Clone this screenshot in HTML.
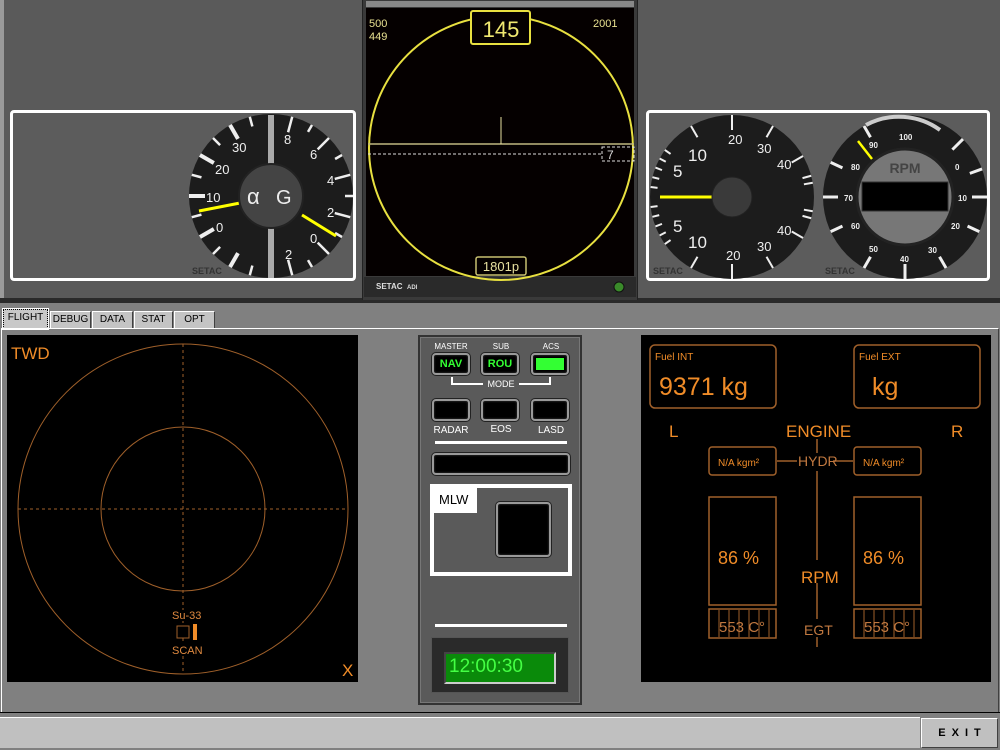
<!DOCTYPE html>
<html><head><meta charset="utf-8"><style>
*{margin:0;padding:0;box-sizing:border-box}
body{width:1000px;height:750px;overflow:hidden;background:#808080;font-family:"Liberation Sans",sans-serif;position:relative}
.a{position:absolute}
.tab{position:absolute;top:311px;height:18px;background:#c4c4c4;border:1px solid #fff;border-right-color:#404040;border-bottom:none;font-size:10px;line-height:16px;text-align:center;color:#000}
.btn{position:absolute;background:#000;border:2px solid #999;border-radius:4px;box-shadow:0 0 0 1px #222,inset 0 0 2px #444}
.lbl{position:absolute;color:#fff;font-size:10px;text-align:center}
</style></head><body>
<div class="a" style="left:0;top:0;width:1000px;height:300px;background:#5a5a5a"></div>
<div class="a" style="left:0;top:0;width:4px;height:300px;background:#9a9a9a"></div>
<div class="a" style="left:0;top:298px;width:1000px;height:5px;background:#2a2a2a"></div>

<div class="a" style="left:10px;top:110px;width:346px;height:171px;border:3px solid #fff;border-radius:4px;background:#5c5c5c"></div>
<svg class="a" style="left:0;top:0" width="362" height="300">
<circle cx="271" cy="196" r="82" fill="#1c1c1c"/>
<g stroke="#eee" stroke-width="2.5">
<line x1="271" y1="114" x2="271" y2="124" transform="rotate(-15 271 196)"/>
<line x1="271" y1="114" x2="271" y2="130" transform="rotate(-30 271 196)" stroke-width="4"/>
<line x1="271" y1="114" x2="271" y2="124" transform="rotate(-45 271 196)"/>
<line x1="271" y1="114" x2="271" y2="130" transform="rotate(-60 271 196)" stroke-width="4"/>
<line x1="271" y1="114" x2="271" y2="124" transform="rotate(-75 271 196)"/>
<line x1="271" y1="114" x2="271" y2="130" transform="rotate(-90 271 196)" stroke-width="4"/>
<line x1="271" y1="114" x2="271" y2="124" transform="rotate(-105 271 196)"/>
<line x1="271" y1="114" x2="271" y2="130" transform="rotate(-120 271 196)" stroke-width="4"/>
<line x1="271" y1="114" x2="271" y2="124" transform="rotate(-135 271 196)"/>
<line x1="271" y1="114" x2="271" y2="130" transform="rotate(-150 271 196)" stroke-width="4"/>
<line x1="271" y1="114" x2="271" y2="124" transform="rotate(-165 271 196)"/>
<line x1="271" y1="114" x2="271" y2="130" transform="rotate(15 271 196)"/>
<line x1="271" y1="114" x2="271" y2="122" transform="rotate(30 271 196)"/>
<line x1="271" y1="114" x2="271" y2="130" transform="rotate(45 271 196)"/>
<line x1="271" y1="114" x2="271" y2="122" transform="rotate(60 271 196)"/>
<line x1="271" y1="114" x2="271" y2="130" transform="rotate(75 271 196)"/>
<line x1="271" y1="114" x2="271" y2="122" transform="rotate(90 271 196)"/>
<line x1="271" y1="114" x2="271" y2="130" transform="rotate(105 271 196)"/>
<line x1="271" y1="114" x2="271" y2="122" transform="rotate(120 271 196)"/>
<line x1="271" y1="114" x2="271" y2="130" transform="rotate(135 271 196)"/>
<line x1="271" y1="114" x2="271" y2="122" transform="rotate(150 271 196)"/>
<line x1="271" y1="114" x2="271" y2="130" transform="rotate(165 271 196)"/>
</g>
<rect x="268" y="115" width="6" height="163" fill="#aaa"/>
<g fill="#eee" font-size="13" font-family="Liberation Sans">
<text x="232" y="152">30</text><text x="215" y="174">20</text><text x="206" y="202">10</text><text x="216" y="232">0</text>
<text x="284" y="144">8</text><text x="310" y="159">6</text><text x="327" y="185">4</text><text x="327" y="217">2</text><text x="310" y="243">0</text><text x="285" y="259">2</text>
</g>
<line x1="199" y1="211" x2="240" y2="203" stroke="#ff0" stroke-width="3"/>
<line x1="302" y1="215" x2="336" y2="236" stroke="#ff0" stroke-width="3"/>
<circle cx="271" cy="196" r="32" fill="#444" stroke="#222" stroke-width="2"/>
<text x="247" y="204" fill="#eee" font-size="22">α</text><text x="276" y="204" fill="#eee" font-size="20">G</text>
<text x="192" y="274" fill="#333" font-size="9" font-weight="bold">SETAC</text>
</svg>

<div class="a" style="left:362px;top:0;width:276px;height:300px;background:#3a3a3a;border-left:1px solid #222;border-right:1px solid #222"></div>
<div class="a" style="left:366px;top:1px;width:268px;height:6px;background:#888"></div>
<div class="a" style="left:366px;top:8px;width:268px;height:268px;background:#050000"></div>
<div class="a" style="left:364px;top:277px;width:272px;height:20px;background:#2a2a2a"></div>
<svg class="a" style="left:362px;top:0" width="276" height="300">
<circle cx="139" cy="148" r="132" fill="none" stroke="#e8e040" stroke-width="2"/>
<line x1="6" y1="144" x2="272" y2="144" stroke="#c0b880" stroke-width="1.5"/>
<line x1="6" y1="154" x2="240" y2="154" stroke="#ddd" stroke-dasharray="3,2"/>
<rect x="240" y="147" width="32" height="14" fill="none" stroke="#ddd" stroke-dasharray="3,2"/>
<text x="245" y="159" fill="#ddd" font-size="12">7</text>
<line x1="139" y1="117" x2="139" y2="144" stroke="#e8e0a0"/>
<rect x="109" y="11" width="59" height="33" rx="2" fill="#050000" stroke="#e8e040" stroke-width="2"/>
<text x="139" y="37" fill="#f0e870" font-size="22" text-anchor="middle">145</text>
<rect x="114" y="257" width="50" height="18" rx="2" fill="#050000" stroke="#c8c070" stroke-width="1.5"/>
<text x="139" y="271" fill="#e8e0a0" font-size="13" text-anchor="middle">1801p</text>
<text x="7" y="27" fill="#e8e090" font-size="11">500</text><text x="7" y="40" fill="#e8e090" font-size="11">449</text>
<text x="231" y="27" fill="#e8e090" font-size="11">2001</text>
<text x="14" y="289" fill="#ddd" font-size="8" font-weight="bold">SETAC</text><text x="45" y="289" fill="#ddd" font-size="6" font-weight="bold">ADI</text>
<circle cx="257" cy="287" r="5" fill="#3a8a2a" stroke="#111"/>
</svg>

<div class="a" style="left:646px;top:110px;width:344px;height:171px;border:3px solid #fff;border-radius:4px;background:#5c5c5c"></div>
<svg class="a" style="left:640px;top:100px" width="360" height="200">
<circle cx="92" cy="97" r="82" fill="#1c1c1c"/>
<g stroke="#eee" stroke-width="2">
<line x1="92" y1="15" x2="92" y2="30"/>
<line x1="92" y1="15" x2="92" y2="28" transform="rotate(30 92 97)"/>
<line x1="92" y1="15" x2="92" y2="28" transform="rotate(60 92 97)"/>
<line x1="92" y1="15" x2="92" y2="24" transform="rotate(75 92 97)"/>
<line x1="92" y1="15" x2="92" y2="24" transform="rotate(80 92 97)"/>
<line x1="92" y1="15" x2="92" y2="24" transform="rotate(100 92 97)"/>
<line x1="92" y1="15" x2="92" y2="24" transform="rotate(105 92 97)"/>
<line x1="92" y1="15" x2="92" y2="28" transform="rotate(120 92 97)"/>
<line x1="92" y1="15" x2="92" y2="28" transform="rotate(150 92 97)"/>
<line x1="92" y1="15" x2="92" y2="30" transform="rotate(180 92 97)"/>
<line x1="92" y1="15" x2="92" y2="28" transform="rotate(-30 92 97)"/>
<line x1="92" y1="15" x2="92" y2="28" transform="rotate(-150 92 97)"/>
<line x1="92" y1="15" x2="92" y2="22" transform="rotate(-55 92 97)"/>
<line x1="92" y1="15" x2="92" y2="22" transform="rotate(-62 92 97)"/>
<line x1="92" y1="15" x2="92" y2="22" transform="rotate(-69 92 97)"/>
<line x1="92" y1="15" x2="92" y2="22" transform="rotate(-76 92 97)"/>
<line x1="92" y1="15" x2="92" y2="22" transform="rotate(-83 92 97)"/>
<line x1="92" y1="15" x2="92" y2="22" transform="rotate(-97 92 97)"/>
<line x1="92" y1="15" x2="92" y2="22" transform="rotate(-104 92 97)"/>
<line x1="92" y1="15" x2="92" y2="22" transform="rotate(-111 92 97)"/>
<line x1="92" y1="15" x2="92" y2="22" transform="rotate(-118 92 97)"/>
<line x1="92" y1="15" x2="92" y2="22" transform="rotate(-125 92 97)"/>
</g>
<g fill="#eee" font-family="Liberation Sans">
<text x="88" y="44" font-size="13">20</text><text x="117" y="53" font-size="13">30</text><text x="137" y="69" font-size="13">40</text>
<text x="48" y="61" font-size="17">10</text><text x="33" y="77" font-size="17">5</text>
<text x="33" y="132" font-size="17">5</text><text x="48" y="148" font-size="17">10</text>
<text x="86" y="160" font-size="13">20</text><text x="117" y="151" font-size="13">30</text><text x="137" y="135" font-size="13">40</text>
</g>
<line x1="20" y1="97" x2="72" y2="97" stroke="#ff0" stroke-width="3"/>
<circle cx="92" cy="97" r="20" fill="#3a3a3a" stroke="#222"/>
<text x="13" y="174" fill="#333" font-size="9" font-weight="bold">SETAC</text>

<circle cx="265" cy="97" r="82" fill="#1c1c1c"/>
<path d="M226 25 A70 70 0 0 1 300 30" fill="none" stroke="#ccc" stroke-width="4"/>
<g stroke="#eee" stroke-width="3">
<line x1="265" y1="15" x2="265" y2="30" transform="rotate(45 265 97)"/>
<line x1="265" y1="15" x2="265" y2="28" transform="rotate(70 265 97)"/>
<line x1="265" y1="15" x2="265" y2="30" transform="rotate(90 265 97)"/>
<line x1="265" y1="15" x2="265" y2="28" transform="rotate(115 265 97)"/>
<line x1="265" y1="15" x2="265" y2="28" transform="rotate(150 265 97)"/>
<line x1="265" y1="15" x2="265" y2="30" transform="rotate(180 265 97)"/>
<line x1="265" y1="15" x2="265" y2="28" transform="rotate(-150 265 97)"/>
<line x1="265" y1="15" x2="265" y2="28" transform="rotate(-115 265 97)"/>
<line x1="265" y1="15" x2="265" y2="30" transform="rotate(-90 265 97)"/>
<line x1="265" y1="15" x2="265" y2="28" transform="rotate(-65 265 97)"/>
<line x1="265" y1="15" x2="265" y2="28" transform="rotate(-30 265 97)"/>
</g>
<g fill="#eee" font-size="8" font-weight="bold" font-family="Liberation Sans">
<text x="259" y="40">100</text><text x="229" y="48">90</text><text x="211" y="70">80</text><text x="204" y="101">70</text>
<text x="211" y="129">60</text><text x="229" y="152">50</text><text x="260" y="162">40</text><text x="288" y="153">30</text>
<text x="311" y="129">20</text><text x="318" y="101">10</text><text x="315" y="70">0</text>
</g>
<line x1="218" y1="41" x2="232" y2="59" stroke="#ff0" stroke-width="2.5"/>
<circle cx="265" cy="97" r="48" fill="#777" stroke="#222" stroke-width="3"/>
<text x="265" y="73" fill="#444" font-size="14" font-weight="bold" text-anchor="middle">RPM</text>
<rect x="222" y="82" width="86" height="29" fill="#000" stroke="#333"/>
<text x="185" y="174" fill="#333" font-size="9" font-weight="bold">SETAC</text>
</svg>

<div class="tab" style="left:3px;width:45px;top:309px;height:20px;border:1px dotted #000;background:#c8c8c8;box-shadow:0 0 0 1px #fff">FLIGHT</div>
<div class="tab" style="left:50px;width:41px">DEBUG</div>
<div class="tab" style="left:92px;width:41px">DATA</div>
<div class="tab" style="left:134px;width:39px">STAT</div>
<div class="tab" style="left:174px;width:41px">OPT</div>
<div class="a" style="left:1px;top:328px;width:998px;height:385px;border-top:1px solid #fff;border-left:1px solid #fff;border-right:1px solid #404040;border-bottom:1px solid #404040"></div>

<div class="a" style="left:7px;top:335px;width:351px;height:347px;background:#000"></div>
<svg class="a" style="left:7px;top:335px" width="351" height="347">
<circle cx="176" cy="174" r="165" fill="none" stroke="#a0602a"/>
<circle cx="176" cy="174" r="82" fill="none" stroke="#a0602a"/>
<line x1="11" y1="174" x2="341" y2="174" stroke="#a0602a" stroke-dasharray="3,3"/>
<line x1="176" y1="9" x2="176" y2="339" stroke="#a0602a" stroke-dasharray="3,3"/>
<rect x="170" y="291" width="12" height="12" fill="#000" stroke="#a0602a"/>
<rect x="186" y="289" width="4" height="16" fill="#f08c28"/>
<rect x="170" y="275" width="30" height="11" fill="#000"/><text x="165" y="284" fill="#e08a40" font-size="11">Su-33</text>
<rect x="164" y="309" width="30" height="11" fill="#000"/><text x="165" y="319" fill="#e08a40" font-size="11">SCAN</text>
<text x="4" y="24" fill="#f08c28" font-size="17">TWD</text>
<text x="335" y="341" fill="#f08c28" font-size="17">X</text>
</svg>

<div class="a" style="left:418px;top:335px;width:164px;height:370px;background:#5a5a5a;border:2px solid #333;box-shadow:inset 0 0 0 1px #777"></div>
<div class="lbl" style="left:430px;top:342px;width:42px;font-size:8px">MASTER</div>
<div class="lbl" style="left:481px;top:342px;width:40px;font-size:8px">SUB</div>
<div class="lbl" style="left:531px;top:342px;width:40px;font-size:8px">ACS</div>
<div class="btn" style="left:432px;top:353px;width:38px;height:22px;color:#3f3;font:bold 11px 'Liberation Sans';text-align:center;line-height:18px">NAV</div>
<div class="btn" style="left:481px;top:353px;width:38px;height:22px;color:#3f3;font:bold 11px 'Liberation Sans';text-align:center;line-height:18px">ROU</div>
<div class="btn" style="left:531px;top:353px;width:38px;height:22px"><div style="margin:3px;height:12px;background:#3f3"></div></div>
<div class="a" style="left:451px;top:377px;width:100px;height:8px;border:2px solid #fff;border-top:none"></div>
<div class="lbl" style="left:483px;top:379px;width:36px;background:#5a5a5a;font-size:9px">MODE</div>
<div class="btn" style="left:432px;top:399px;width:38px;height:22px"></div>
<div class="btn" style="left:481px;top:399px;width:38px;height:22px"></div>
<div class="btn" style="left:531px;top:399px;width:38px;height:22px"></div>
<div class="lbl" style="left:428px;top:425px;width:46px">RADAR</div>
<div class="lbl" style="left:481px;top:424px;width:40px">EOS</div>
<div class="lbl" style="left:531px;top:425px;width:40px">LASD</div>
<div class="a" style="left:435px;top:441px;width:132px;height:3px;background:#fff"></div>
<div class="btn" style="left:432px;top:453px;width:138px;height:22px"></div>
<div class="a" style="left:430px;top:484px;width:142px;height:92px;border:4px solid #fff;background:#5a5a5a"></div>
<div class="a" style="left:434px;top:488px;width:43px;height:25px;background:#fff;font-size:13px;padding:4px 0 0 5px">MLW</div>
<div class="btn" style="left:496px;top:502px;width:55px;height:55px"></div>
<div class="a" style="left:435px;top:624px;width:132px;height:3px;background:#fff"></div>
<div class="a" style="left:431px;top:637px;width:138px;height:56px;background:#2a2a2a;border:1px solid #555"></div>
<div class="a" style="left:444px;top:652px;width:112px;height:32px;background:#0a8a0a;border:2px solid #ccc;border-top-color:#444;border-left-color:#444;color:#4f4;font-size:19px;padding:2px 0 0 3px">12:00:30</div>

<div class="a" style="left:641px;top:335px;width:350px;height:347px;background:#000"></div>
<svg class="a" style="left:641px;top:335px" width="350" height="347" font-family="Liberation Sans">
<g fill="none" stroke="#a0602a" stroke-width="1.5">
<rect x="9" y="10" width="126" height="63" rx="5"/>
<rect x="213" y="10" width="126" height="63" rx="5"/>
<rect x="68" y="112" width="67" height="28" rx="3"/>
<rect x="213" y="112" width="67" height="28" rx="3"/>
<rect x="68" y="162" width="67" height="108"/>
<rect x="213" y="162" width="67" height="108"/>
<rect x="68" y="274" width="67" height="29"/>
<rect x="213" y="274" width="67" height="29"/>
<line x1="136" y1="126" x2="156" y2="126"/><line x1="192" y1="126" x2="212" y2="126"/>
<line x1="176" y1="104" x2="176" y2="118"/><line x1="176" y1="136" x2="176" y2="225"/>
<line x1="176" y1="248" x2="176" y2="284"/><line x1="176" y1="302" x2="176" y2="312"/>
</g>
<g stroke="#a0602a" stroke-width="1">
<line x1="78" y1="275" x2="78" y2="302"/><line x1="88" y1="275" x2="88" y2="302"/><line x1="98" y1="275" x2="98" y2="302"/><line x1="108" y1="275" x2="108" y2="302"/><line x1="118" y1="275" x2="118" y2="302"/><line x1="128" y1="275" x2="128" y2="302"/>
<line x1="223" y1="275" x2="223" y2="302"/><line x1="233" y1="275" x2="233" y2="302"/><line x1="243" y1="275" x2="243" y2="302"/><line x1="253" y1="275" x2="253" y2="302"/><line x1="263" y1="275" x2="263" y2="302"/><line x1="273" y1="275" x2="273" y2="302"/>
</g>
<g fill="#f08c28">
<text x="14" y="25" font-size="10">Fuel INT</text><text x="18" y="60" font-size="25">9371 kg</text>
<text x="218" y="25" font-size="10">Fuel EXT</text><text x="231" y="60" font-size="25">kg</text>
<text x="28" y="102" font-size="17">L</text><text x="145" y="102" font-size="17">ENGINE</text><text x="310" y="102" font-size="17">R</text>
<text x="77" y="131" font-size="10">N/A kgm²</text><text x="222" y="131" font-size="10">N/A kgm²</text>
<text x="77" y="229" font-size="18">86 %</text><text x="222" y="229" font-size="18">86 %</text>
<text x="160" y="248" font-size="17">RPM</text>
</g>
<g fill="#c07840">
<text x="157" y="131" font-size="14">HYDR</text>
<text x="78" y="297" font-size="15">553 C°</text><text x="223" y="297" font-size="15">553 C°</text>
<text x="163" y="300" font-size="14">EGT</text>
</g>
</svg>

<div class="a" style="left:0;top:712px;width:1000px;height:1px;background:#000"></div>
<div class="a" style="left:0;top:717px;width:920px;height:31px;background:#c0c0c0;border-top:1px solid #fff"></div>
<div class="a" style="left:921px;top:718px;width:77px;height:30px;background:#c0c0c0;border:1px solid #fff;border-right-color:#404040;border-bottom-color:#404040;font-size:11px;font-weight:bold;letter-spacing:6px;text-align:center;line-height:28px;padding-left:6px">EXIT</div>
</body></html>
